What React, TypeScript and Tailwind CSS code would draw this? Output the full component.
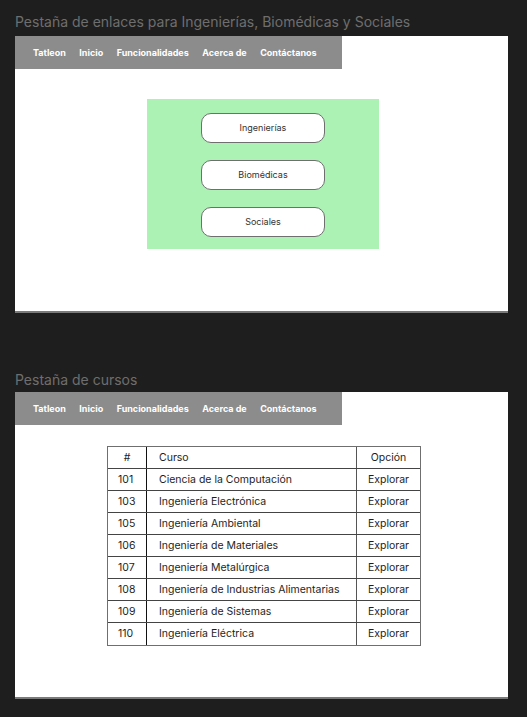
const navItems = ['Tatleon', 'Inicio', 'Funcionalidades', 'Acerca de', 'Contáctanos'];

const cursos: [string, string][] = [
  ['101', 'Ciencia de la Computación'],
  ['103', 'Ingeniería Electrónica'],
  ['105', 'Ingeniería Ambiental'],
  ['106', 'Ingeniería de Materiales'],
  ['107', 'Ingeniería Metalúrgica'],
  ['108', 'Ingeniería de Industrias Alimentarias'],
  ['109', 'Ingeniería de Sistemas'],
  ['110', 'Ingeniería Eléctrica'],
];

const NavBar = () => (
  <div className="flex h-[33px] w-[327px] items-center gap-[13.5px] bg-[#8c8c8c] pl-[18px] text-[9px] font-bold text-white">
    {navItems.map((item) => (
      <span key={item}>{item}</span>
    ))}
  </div>
);

const LinkButton = ({ label }: { label: string }) => (
  <div className="flex h-[30px] w-[124px] items-center justify-center rounded-[10px] border border-[#6f6f6f] bg-white text-[9px] text-[#333]">
    {label}
  </div>
);

export default function App() {
  return (
    <div
      className="h-[717px] w-[527px] bg-[#1e1e1e] px-[15px] pt-[13px]"
      style={{ fontFamily: 'Inter, "Noto Sans", sans-serif' }}
    >
      <div className="h-[23px] text-[14px] leading-[18px] text-[#6e6e6e]">
        Pestaña de enlaces para Ingenierías, Biomédicas y Sociales
      </div>
      <div className="h-[277px] w-[493px] border-b-2 border-[#7a7a7a] bg-white">
        <NavBar />
        <div className="ml-[132px] mt-[30px] flex h-[150px] w-[232px] flex-col items-center gap-[17px] bg-[#adf2b5] pt-[14px]">
          <LinkButton label="Ingenierías" />
          <LinkButton label="Biomédicas" />
          <LinkButton label="Sociales" />
        </div>
      </div>

      <div className="mt-[58px] h-[21px] text-[14px] leading-[18px] text-[#6e6e6e]">Pestaña de cursos</div>
      <div className="h-[307px] w-[493px] border-b-2 border-[#7a7a7a] bg-white">
        <NavBar />
        <div className="ml-[92px] mt-[21px] w-[314px] border border-[#6f6f6f] text-[10.5px] text-[#1e1e1e]">
          <div className="flex h-[22px] items-center border-b border-[#444]">
            <div className="flex h-full w-[39px] items-center justify-center border-r border-[#111]">#</div>
            <div className="flex h-full w-[210px] items-center border-r-[1.5px] border-[#555] pl-[12px]">Curso</div>
            <div className="flex h-full flex-1 items-center justify-center">Opción</div>
          </div>
          {cursos.map(([code, name], i) => (
            <div
              key={code}
              className={`flex h-[22px] items-center ${i < cursos.length - 1 ? 'border-b border-[#444]' : ''}`}
            >
              <div className="flex h-full w-[39px] items-center border-r border-[#111] pl-[10px]">{code}</div>
              <div className="flex h-full w-[210px] items-center border-r-[1.5px] border-[#555] pl-[12px]">{name}</div>
              <div className="flex h-full flex-1 items-center justify-center">Explorar</div>
            </div>
          ))}
        </div>
      </div>
    </div>
  );
}
